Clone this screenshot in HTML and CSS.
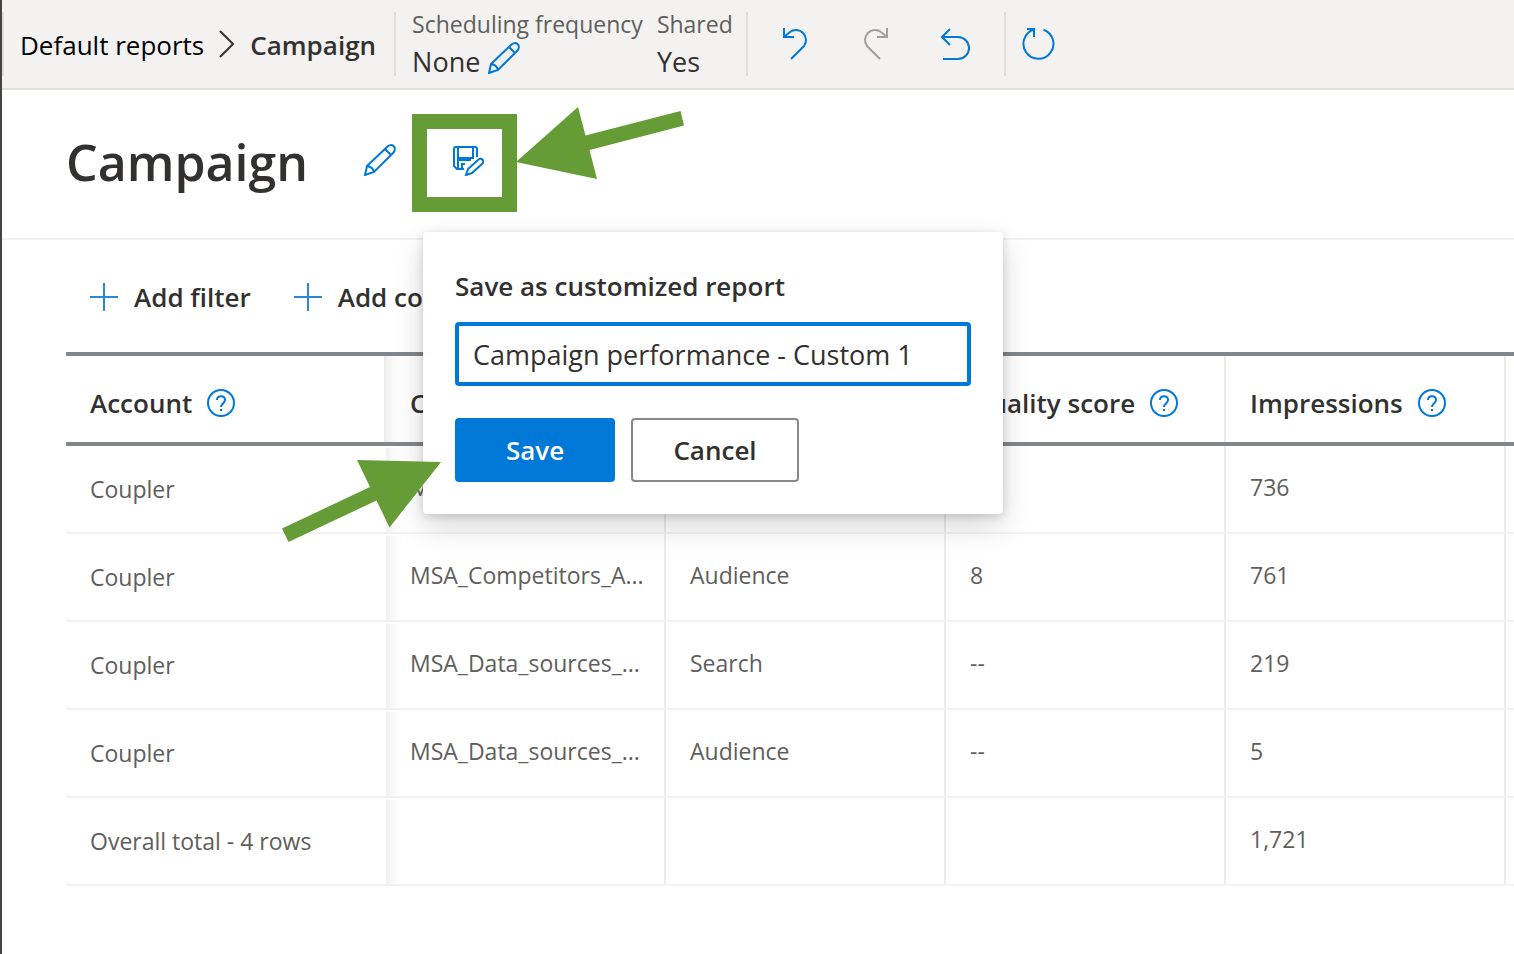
FILE: index.html
```html
<!DOCTYPE html>
<html lang="en">

<head>
    <meta charset="UTF-8">
    <title>Campaign</title>
    <link rel="stylesheet" href="styles.css">
</head>

<body>
    <header class="topbar">
        <nav class="crumbs">
            <a href="#" class="crumb">Default reports</a>
            <svg class="chevron" width="16" height="28" viewBox="0 0 16 28"><path d="M1 1l13 13L1 27" /></svg>
            <span class="crumb current">Campaign</span>
        </nav>
        <div class="details">
            <div class="detail">
                <span class="detail-name">Scheduling frequency</span>
                <div class="detail-value">
                    <span>None</span>
                    <button class="icon-button" aria-label="Edit schedule">
                        <svg class="icon" width="32" height="32" viewBox="0 0 32 32"><path d="M1 31l2-9L23 3c5-5 11 1 6 6L10 28z M3 22q6 1 7 6 M21 5l6 6" /></svg>
                    </button>
                </div>
            </div>
            <div class="detail">
                <span class="detail-name">Shared</span>
                <div class="detail-value">Yes</div>
            </div>
        </div>
        <div class="history">
            <button class="icon-button" aria-label="Undo">
                <svg class="icon" width="32" height="32" viewBox="0 0 32 32"><path d="M4 0v9h10 M4 9l6-5a10 10 0 0 1 14 14L11 31" /></svg>
            </button>
            <button class="icon-button" aria-label="Redo" disabled>
                <svg class="icon" width="32" height="32" viewBox="0 0 32 32"><path d="M27 0v9H17 M27 9l-6-5A10 10 0 0 0 7 18l13 13" /></svg>
            </button>
            <button class="icon-button" aria-label="Revert">
                <svg class="icon" width="32" height="32" viewBox="0 0 32 32"><path d="M10 1L2 9l8 8 M2 9h16a11 11 0 0 1 0 22H3" /></svg>
            </button>
        </div>
        <button class="icon-button refresh" aria-label="Refresh">
            <svg class="icon" width="34" height="34" viewBox="0 0 34 34"><path d="M5 2h7v8 M12 2.500A15 15 0 1 0 21.500 2.700" /></svg>
        </button>
    </header>

    <main>
        <section class="title-row">
            <h1>Campaign</h1>
            <button class="icon-button" aria-label="Rename report">
                <svg class="icon" width="32" height="32" viewBox="0 0 32 32"><path d="M1 31l2-9L23 3c5-5 11 1 6 6L10 28z M3 22q6 1 7 6 M21 5l6 6" /></svg>
            </button>
            <button class="icon-button save-as" aria-label="Save as customized report">
                <svg class="icon" width="32" height="32" viewBox="0 0 32 32"><path d="M12 25H5l-3-3V5q0-2 2-2h19q2 0 2 2v8 M6 3v11h15V3 M6 25v-9h13 M10 25v-5h3 M14 31l2-6 10-9c4-3 7 1 4 4l-10 9z" /></svg>
            </button>

            <form class="popup">
                <label for="report-name">Save as customized report</label>
                <input type="text" id="report-name" value="Campaign performance - Custom 1">
                <div class="popup-buttons">
                    <button type="button" class="button primary">Save</button>
                    <button type="button" class="button">Cancel</button>
                </div>
            </form>
        </section>

        <div class="toolbar">
            <button class="add">
                <svg class="plus" width="28" height="28" viewBox="0 0 28 28"><path d="M14 0v28M0 14h28" /></svg>
                Add filter
            </button>
            <button class="add">
                <svg class="plus" width="28" height="28" viewBox="0 0 28 28"><path d="M14 0v28M0 14h28" /></svg>
                Add column
            </button>
        </div>

        <div class="table-wrap">
            <table>
                <colgroup>
                    <col class="col-account">
                    <col class="col-data">
                    <col class="col-data">
                    <col class="col-data">
                    <col class="col-data">
                    <col>
                </colgroup>
                <thead>
                    <tr>
                        <th><div class="head">Account <svg class="help" width="28" height="28" viewBox="0 0 28 28"><circle cx="14" cy="14" r="13" /><path d="M10 11c0-5 8-5 8 0 0 3-4 4-4 7m0 2v2" /></svg></div></th>
                        <th><div class="head">Campaign</div></th>
                        <th><div class="head">Campaign type</div></th>
                        <th><div class="head">Quality score <svg class="help" width="28" height="28" viewBox="0 0 28 28"><circle cx="14" cy="14" r="13" /><path d="M10 11c0-5 8-5 8 0 0 3-4 4-4 7m0 2v2" /></svg></div></th>
                        <th><div class="head">Impressions <svg class="help" width="28" height="28" viewBox="0 0 28 28"><circle cx="14" cy="14" r="13" /><path d="M10 11c0-5 8-5 8 0 0 3-4 4-4 7m0 2v2" /></svg></div></th>
                        <th></th>
                    </tr>
                </thead>
                <tbody>
                    <tr>
                        <td>Coupler</td>
                        <td>MSA_Competitors_...</td>
                        <td>Search</td>
                        <td></td>
                        <td>736</td>
                        <td></td>
                    </tr>
                    <tr>
                        <td>Coupler</td>
                        <td>MSA_Competitors_A...</td>
                        <td>Audience</td>
                        <td>8</td>
                        <td>761</td>
                        <td></td>
                    </tr>
                    <tr>
                        <td>Coupler</td>
                        <td>MSA_Data_sources_...</td>
                        <td>Search</td>
                        <td>--</td>
                        <td>219</td>
                        <td></td>
                    </tr>
                    <tr>
                        <td>Coupler</td>
                        <td>MSA_Data_sources_...</td>
                        <td>Audience</td>
                        <td>--</td>
                        <td>5</td>
                        <td></td>
                    </tr>
                    <tr>
                        <td>Overall total - 4 rows</td>
                        <td></td>
                        <td></td>
                        <td></td>
                        <td>1,721</td>
                        <td></td>
                    </tr>
                </tbody>
            </table>
        </div>
    </main>

    <!-- green callouts over the page -->
    <svg class="callouts" width="700" height="560" viewBox="0 0 700 560">
        <rect x="419.500" y="121.500" width="90" height="83" />
        <path d="M516 162l62-55 7.500 28.500L680.500 111l3.500 14.500-94.500 24.500 7.500 29z" />
        <path d="M441 462l-84-2 13 27-88 41.500 6.500 13.500 88-41.500 13 27z" />
    </svg>
</body>

</html>
```
FILE: styles.css
```css
* {
    box-sizing: border-box;
}

body {
    position: relative;
    margin: 0;
    min-height: 100vh;
    overflow: hidden;
    border-left: 2px solid #444444;
    background-color: #ffffff;
    color: #323130;
    font-family: "Open Sans", "Noto Sans", sans-serif;
    font-size: 26px;
}

button {
    padding: 0;
    border: 0;
    background: none;
    color: inherit;
    font: inherit;
    cursor: pointer;
}

svg {
    flex: none;
    fill: none;
}

.icon-button {
    display: flex;
    color: #0078d7;
}

.icon-button:disabled {
    color: #a19f9d;
}

.icon {
    stroke: currentColor;
    stroke-width: 2;
}

/* top bar */
.topbar {
    display: flex;
    align-items: center;
    height: 90px;
    border-bottom: 2px solid #e1dfdd;
    background-color: #f3f2f1;
    white-space: nowrap;
}

.crumbs,
.details,
.history {
    display: flex;
    align-items: center;
    height: 64px;
    border-right: 2px solid #e1dfdd;
}

.crumbs {
    gap: 15px;
    padding: 0 18px 0 16px;
    border-left: 2px solid #e1dfdd;
}

.crumb {
    padding-top: 2px;
    color: #000000;
    text-decoration: none;
}

.current {
    color: #323130;
    font-weight: 600;
}

.chevron {
    stroke: #323130;
    stroke-width: 2;
}

.details {
    gap: 14px;
    padding: 0 13px 0 16px;
}

.detail-name {
    display: block;
    color: #605e5c;
    font-size: 23px;
    line-height: 36px;
}

.detail-value {
    display: flex;
    gap: 8px;
    height: 40px;
    font-size: 27px;
    line-height: 40px;
}

.detail-value .icon-button {
    height: 32px;
}

.history {
    gap: 48px;
    padding: 0 32px;
}

.refresh {
    margin-left: 16px;
}

/* title */
.title-row {
    position: relative;
    display: flex;
    align-items: center;
    height: 150px;
    padding: 0 64px 4px;
    border-bottom: 2px solid #f3f2f1;
}

h1 {
    margin: 0 56px 0 0;
    font-size: 50px;
    font-weight: 600;
}

.title-row .icon-button {
    margin-bottom: 4px;
}

.save-as {
    margin-left: 56px;
}

.popup {
    position: absolute;
    z-index: 2;
    top: 142px;
    left: 421px;
    width: 580px;
    padding: 32px;
    border-radius: 4px;
    background-color: #ffffff;
    box-shadow: 0 12px 30px rgba(0, 0, 0, 0.16), 0 2px 8px rgba(0, 0, 0, 0.14);
}

.popup label {
    display: block;
    margin-bottom: 14px;
    font-weight: 600;
    line-height: 44px;
}

.popup input {
    display: block;
    width: 100%;
    height: 64px;
    padding: 0 14px;
    border: 4px solid #0078d7;
    border-radius: 4px;
    outline: none;
    color: #323130;
    font: inherit;
    font-size: 27px;
}

.popup-buttons {
    display: flex;
    gap: 16px;
    margin-top: 32px;
}

.button {
    width: 168px;
    height: 64px;
    border: 2px solid #8a8886;
    border-radius: 4px;
    font-weight: 600;
}

.primary {
    width: 160px;
    border-color: #0078d7;
    background-color: #0078d7;
    color: #ffffff;
}

/* toolbar */
.toolbar {
    display: flex;
    gap: 43px;
    height: 112px;
    padding: 2px 88px 0;
}

.add {
    display: flex;
    align-items: center;
    gap: 16px;
    font-weight: 600;
}

.plus {
    stroke: #2b88d8;
    stroke-width: 2;
}

/* table */
.table-wrap {
    margin-left: 64px;
    overflow: hidden;
}

table {
    width: 100%;
    border-collapse: separate;
    border-spacing: 0;
    table-layout: fixed;
}

.col-account {
    width: 320px;
}

.col-data {
    width: 280px;
}

th,
td {
    padding: 0 0 4px 24px;
    box-shadow: inset -2px 0 #edebe9;
    text-align: left;
    white-space: nowrap;
}

th {
    height: 94px;
    padding: 8px 0 0 24px;
    border-top: 4px solid #80868b;
    border-bottom: 4px solid #80868b;
    font-weight: 600;
}

td {
    height: 88px;
    border-bottom: 2px solid #f3f2f1;
    color: #605e5c;
    font-size: 23px;
}

td:first-child {
    padding-bottom: 0;
}

td:first-child,
th:last-child,
td:last-child {
    box-shadow: none;
}

th:nth-child(2),
td:nth-child(2) {
    background: linear-gradient(to right, #f0f0f0, #fafafa 8px, #ffffff 16px) 0 2px no-repeat;
}

th:nth-child(2) {
    background-position: 0 0;
}

.head {
    display: flex;
    align-items: center;
    gap: 15px;
}

.help {
    stroke: #0078d7;
    stroke-width: 2;
}

.callouts {
    position: absolute;
    z-index: 3;
    top: 0;
    left: -2px;
    pointer-events: none;
}

.callouts rect {
    stroke: #669c35;
    stroke-width: 15;
}

.callouts path {
    fill: #669c35;
}
```
